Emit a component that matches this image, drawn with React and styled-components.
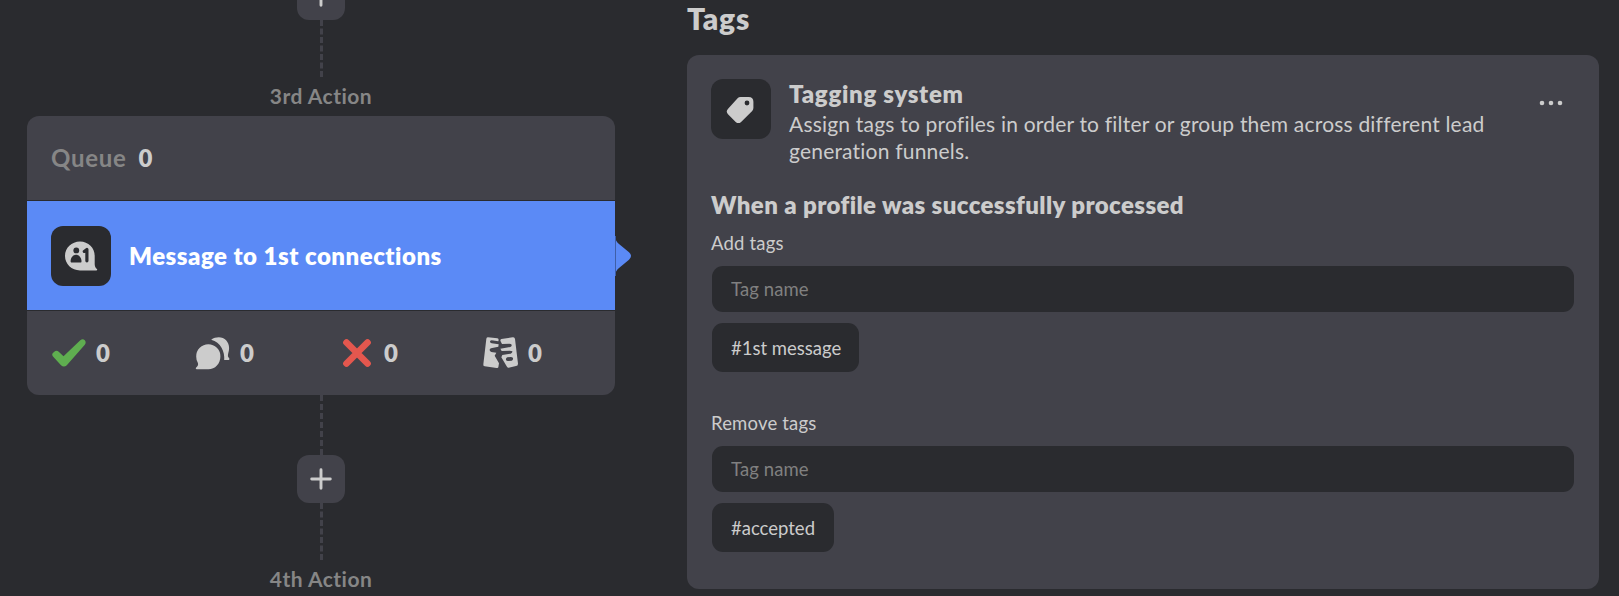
import React from "react";
import styled, { createGlobalStyle } from "styled-components";

const Global = createGlobalStyle`
  *, *::before, *::after { box-sizing: border-box; }
  body {
    margin: 0;
    background: #2a2b2f;
    color: #cccccc;
    font-family: Lato, "Open Sans", sans-serif;
    overflow: hidden;
  }
`;

const Page = styled.div`
  display: flex;
  align-items: flex-start;
  height: 596px;
  overflow: hidden;
`;

const Flow = styled.section`
  display: flex;
  flex-direction: column;
  align-items: center;
  width: 588px;
  margin: -28px 0 0 27px;
`;

const AddButton = styled.button`
  display: grid;
  place-items: center;
  flex: none;
  width: 48px;
  height: 48px;
  padding: 0;
  border: 0;
  border-radius: 12px;
  background: #42424a;
  color: #cccccc;
`;

const Connector = styled.div`
  flex: none;
  width: 3px;
  height: ${(p) => p.$length}px;
  margin-left: 1px;
  border-left: 3px dashed #42424a;
`;

const StepLabel = styled.div`
  flex: none;
  height: 39px;
  padding-top: 6px;
  font-size: 21px;
  font-weight: 700;
  line-height: 26px;
  letter-spacing: 0.48px;
  color: #868686;
`;

const StepCard = styled.article`
  flex: none;
  width: 100%;
  height: 279px;
  display: flex;
  flex-direction: column;
  gap: 1px;
`;

const Queue = styled.header`
  display: flex;
  align-items: center;
  gap: 12px;
  height: 84px;
  padding: 0 24px 1px;
  border-radius: 12px 12px 0 0;
  background: #42424a;
  font-size: 24px;
  font-weight: 700;
  letter-spacing: 0.7px;
`;

const Muted = styled.span`
  color: #868686;
`;

const Count = styled.span`
  font-weight: 800;
`;

const StepBody = styled.div`
  position: relative;
  display: flex;
  align-items: center;
  gap: 18px;
  height: 109px;
  padding: 0 24px;
  background: #5b8af6;
`;

const Pointer = styled.svg`
  position: absolute;
  left: 100%;
  top: 34px;
`;

const IconTile = styled.div`
  display: grid;
  place-items: center;
  flex: none;
  width: 60px;
  height: 60px;
  border-radius: 12px;
  background: #2a2b2f;
  color: #cccccc;
`;

const StepTitle = styled.h3`
  margin: 0;
  color: #ffffff;
  font-size: 24px;
  font-weight: 800;
  letter-spacing: 0.5px;
`;

const Stats = styled.footer`
  display: grid;
  grid-template-columns: repeat(4, 144px);
  align-items: center;
  height: 84px;
  padding: 0 24px 1px;
  border-radius: 0 0 12px 12px;
  background: #42424a;
`;

const Stat = styled.div`
  display: flex;
  align-items: center;
  gap: 10px;
  font-size: 24px;
  font-weight: 800;
  svg { flex: none; }
`;

const Settings = styled.section`
  width: 912px;
  margin-left: 72px;
`;

const Heading = styled.h1`
  height: 55px;
  margin: 0;
  font-size: 30px;
  font-weight: 800;
  line-height: 36px;
  letter-spacing: 0.75px;
`;

const Panel = styled.div`
  height: 534px;
  padding: 24px;
  border-radius: 12px;
  background: #42424a;
`;

const PanelHead = styled.header`
  display: flex;
  gap: 18px;
  height: 108px;
`;

const Intro = styled.div`
  flex: 1;
`;

const PanelTitle = styled.h2`
  margin: 0;
  font-size: 24px;
  font-weight: 800;
  line-height: 30px;
  letter-spacing: 0.7px;
`;

const Description = styled.p`
  width: 720px;
  margin: 1px 0 0;
  font-size: 21px;
  line-height: 27px;
  letter-spacing: 0.2px;
`;

const MenuButton = styled.button`
  display: grid;
  place-items: center;
  width: 48px;
  height: 48px;
  padding: 0;
  border: 0;
  background: none;
  color: #cccccc;
`;

const Subheading = styled.h3`
  margin: 0;
  font-size: 24px;
  font-weight: 800;
  line-height: 36px;
  letter-spacing: 0.4px;
`;

const Field = styled.div`
  display: flex;
  flex-direction: column;
  align-items: flex-start;
  height: 180px;
`;

const FieldLabel = styled.label`
  height: 43px;
  padding-top: 7px;
  font-size: 18.5px;
  line-height: 26px;
  letter-spacing: 0.18px;
`;

const TagInput = styled.input`
  width: 862px;
  height: 46px;
  margin-left: 1px;
  padding: 0 19px;
  border: 0;
  border-radius: 11px;
  background: #2a2b2f;
  color: #cccccc;
  font: 400 18.5px Lato, sans-serif;
  letter-spacing: 0.1px;
  &::placeholder { color: #808080; opacity: 1; }
`;

const Tag = styled.span`
  display: flex;
  align-items: center;
  width: ${(p) => p.$width}px;
  height: 49px;
  margin: 11px 0 0 1px;
  padding-left: 19px;
  border-radius: 11px;
  background: #2a2b2f;
  font-size: 18.5px;
`;

const PlusIcon = () => (
  <svg width="22" height="22" viewBox="0 0 22 22" stroke="currentColor" strokeWidth="2.9" strokeLinecap="round">
    <path d="M11 1.7V20.3M1.7 11H20.3" />
  </svg>
);

const FirstConnectionIcon = () => (
  <svg width="34" height="30" viewBox="0 0 34 30">
    <path d="M16 .6C7.6.6 1 7.1 1 15s6.600 14.400 15 14.400H32.200c1 0 1.300-.8.700-1.400C31.200 26.400 30.600 24.500 30.700 22.500V15C30.700 7.100 24.400.6 16 .6Z" fill="currentColor" />
    <g fill="#2a2b2f">
      <circle cx="12.300" cy="9.400" r="2.900" />
      <path d="M7.600 21.600c-.8 0-1-.8-1-1.300 0-3.800 2.500-6.600 5.400-6.600 3 0 5.500 2.900 5.500 6.600 0 .7-.2 1.300-1 1.300Z" />
    </g>
    <path d="M20.300 10.400 22.900 8.400V19.800" fill="none" stroke="#2a2b2f" strokeWidth="3.200" strokeLinecap="round" strokeLinejoin="round" />
  </svg>
);

const TagIcon = () => (
  <svg width="31" height="30" viewBox="0 -2 31 30">
    <path fillRule="evenodd" fill="currentColor" d="M14.500 1H22.600Q27.400 1 27.400 5.800V12Q27.400 13.700 26.200 15L15.100 25.900Q12.400 28.300 9.700 25.900L2 18.300Q-.6 15.500 2.100 12.700L11.600 2.300Q12.800 1 14.500 1ZM21 4.600A2.400 2.400 0 1 0 21 9.400 2.400 2.400 0 1 0 21 4.600Z" />
  </svg>
);

const CheckIcon = () => (
  <svg width="35" height="34" viewBox="0 0 35 34">
    <path d="M3 16 Q5.500 13.600 8 16L12.500 20.200L29.300 4.300Q31.800 2.200 33.800 4.300Q35.600 6.500 33.600 9L15.800 29.200Q12.800 31.900 10 29.200L2 20.400Q0 18 3 16Z" fill="#5fae50" />
  </svg>
);

const RepliesIcon = () => (
  <svg width="35" height="34" viewBox="0 0 35 34" fill="currentColor">
    <path d="M13.300 8.300A12.100 12.100 0 0 1 25.400 20.400C25.400 27.600 20.200 33.200 13.300 33.200H1.700C.6 33.200.5 32.200 1.200 31.600 2.700 30.300 3.500 28.600 2.900 27A13 13 0 0 1 1.200 20.400 12.100 12.100 0 0 1 13.300 8.300Z" />
    <path d="M16.200 3.700C18.500 2 21.200 1.300 23.700 1.300 29.700 1.300 34.100 6 34.100 12C34.100 15.500 32.700 17.700 32.900 20.300 33.300 21.600 34.400 22 34.400 23 34.400 23.600 34 24 33.200 24H29.200C30 15.700 25.700 6.200 16.200 3.700Z" />
  </svg>
);

const CrossIcon = () => (
  <svg width="35" height="34" viewBox="0 0 35 34">
    <path d="M7 6 28 27M28 6 7 27" stroke="#e4574e" strokeWidth="6.700" strokeLinecap="round" transform="translate(.5 .5)" />
  </svg>
);

const TornPageIcon = () => (
  <svg width="35" height="34" viewBox="22 17 105 102" fill="currentColor">
    <path d="M37 21 65 24Q69 25 69 29L68 33 48 30Q42 31 43 35 44 38 48 39L69 42 68 49 46 54 Q41 56 42 60 43 64 47 65L62 67 57 76 70 99 68 111Q67 114 63 113L27 108Q22 108 23 102L32 25Q33 21 37 21Z" />
    <path fillRule="evenodd" d="M77 26 111 21Q117 20 118 26L127 100Q127 107 121 107L99 112Q95 113 93 108L77 81 80 74 105 70Q111 68 110 63 107 61 102 61L78 62 74 55 104 50Q109 48 108 43 106 40 101 40L79 41 74 31Q74 27 77 26ZM95 81Q90 83 91 89 93 93 99 92L108 91Q113 89 112 83 110 80 105 80Z" />
  </svg>
);

const DotsIcon = () => (
  <svg width="24" height="6" viewBox="0 0 24 6" fill="currentColor">
    <circle cx="3" cy="3" r="2.300" />
    <circle cx="12" cy="3" r="2.300" />
    <circle cx="21" cy="3" r="2.300" />
  </svg>
);

const stats = [
  { name: "successful", Icon: CheckIcon, value: 0 },
  { name: "replies", Icon: RepliesIcon, value: 0 },
  { name: "failed", Icon: CrossIcon, value: 0 },
  { name: "excluded", Icon: TornPageIcon, value: 0 },
];

function TagField({ label, tag, tagWidth }) {
  return (
    <Field>
      <FieldLabel>{label}</FieldLabel>
      <TagInput placeholder="Tag name" />
      <Tag $width={tagWidth}>{tag}</Tag>
    </Field>
  );
}

export default function App() {
  return (
    <>
      <Global />
      <Page>
        <Flow>
          <AddButton><PlusIcon /></AddButton>
          <Connector $length={57} />
          <StepLabel>3rd Action</StepLabel>
          <StepCard>
            <Queue><Muted>Queue</Muted><Count>0</Count></Queue>
            <StepBody>
              <IconTile><FirstConnectionIcon /></IconTile>
              <StepTitle>Message to 1st connections</StepTitle>
              <Pointer width="17" height="42" viewBox="0 1 17 42">
                <path d="M0 2C.5 6 1.500 8 4 10L14 18.300Q18 22 14 25.700L4 34C1.500 36 .5 38 0 42Z" fill="#5b8af6" />
                <path d="M.5 2V42" stroke="#3f5fa8" />
              </Pointer>
            </StepBody>
            <Stats>
              {stats.map(({ name, Icon, value }) => (
                <Stat key={name}><Icon />{value}</Stat>
              ))}
            </Stats>
          </StepCard>
          <Connector $length={60} />
          <AddButton><PlusIcon /></AddButton>
          <Connector $length={57} />
          <StepLabel>4th Action</StepLabel>
        </Flow>
        <Settings>
          <Heading>Tags</Heading>
          <Panel>
            <PanelHead>
              <IconTile><TagIcon /></IconTile>
              <Intro>
                <PanelTitle>Tagging system</PanelTitle>
                <Description>
                  Assign tags to profiles in order to filter or group them across different lead generation funnels.
                </Description>
              </Intro>
              <MenuButton><DotsIcon /></MenuButton>
            </PanelHead>
            <Subheading>When a profile was successfully processed</Subheading>
            <TagField label="Add tags" tag="#1st message" tagWidth={147} />
            <TagField label="Remove tags" tag="#accepted" tagWidth={122} />
          </Panel>
        </Settings>
      </Page>
    </>
  );
}
